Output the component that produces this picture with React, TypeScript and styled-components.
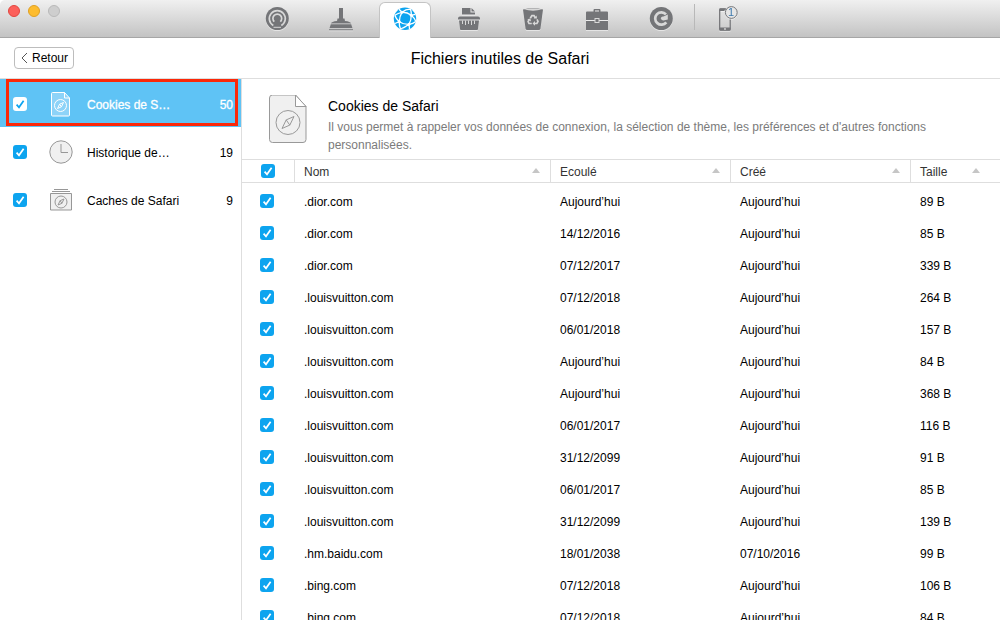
import React from 'react';
import styled, { createGlobalStyle, css } from 'styled-components';

const blue = '#0da4ef';
const line = '#dedede';

const tick = (color: string) =>
  `url("data:image/svg+xml,%3Csvg xmlns='http://www.w3.org/2000/svg' viewBox='0 0 14 14'%3E%3Cpath d='M3.6 7.6 6 10.3 10.6 3.8' fill='none' stroke='%23${color}' stroke-width='1.7'/%3E%3C/svg%3E")`;

const GlobalStyle = createGlobalStyle`
  * { box-sizing: border-box; }
  body {
    margin: 0;
    background: #fff;
    color: #000;
    font-family: "Liberation Sans", Arial, sans-serif;
    font-size: 12px;
    line-height: 16px;
  }
  button, input { font: inherit; color: inherit; margin: 0; }
`;

const Window = styled.div`
  display: flex;
  flex-direction: column;
  height: 100vh;
  overflow: hidden;
`;

const Toolbar = styled.header`
  position: relative;
  display: flex;
  justify-content: center;
  flex: none;
  height: 38px;
  padding-left: 2px;
  background: linear-gradient(#f0f0f0, #dcdcdc 45%, #c3c3c3);
  border-bottom: 1px solid #a6a6a6;
  border-radius: 5px 0 0 0;
`;

const Lights = styled.div`
  position: absolute;
  left: 8px;
  top: 5px;
  display: flex;
  gap: 8px;
`;

const Light = styled.button<{ $fill: string; $edge: string }>`
  width: 12px;
  height: 12px;
  padding: 0;
  border: 1px solid ${(p) => p.$edge};
  border-radius: 50%;
  background: ${(p) => p.$fill};
`;

const Nav = styled.nav`
  display: flex;
`;

const ToolTab = styled.button<{ $active?: boolean; $divided?: boolean }>`
  position: relative;
  display: flex;
  justify-content: center;
  width: 52px;
  height: 36px;
  margin: 2px 6px 0;
  padding: 4px 0 0;
  border: 0;
  background: none;
  color: #747578;
  svg { filter: drop-shadow(0 1px 0 rgba(255, 255, 255, 0.5)); }
  ${(p) =>
    p.$active &&
    css`
      border: 1px solid #c4c4c4;
      border-bottom: 0;
      border-radius: 6px 6px 0 0;
      padding-top: 3px;
      background: #fff;
      color: ${blue};
    `}
  ${(p) =>
    p.$divided &&
    css`
      &::before {
        content: '';
        position: absolute;
        left: -5px;
        top: 2px;
        width: 1px;
        height: 26px;
        background: #b8b8b8;
      }
    `}
`;

const TitleBar = styled.div`
  display: grid;
  grid-template-columns: 1fr auto 1fr;
  align-items: center;
  flex: none;
  height: 41px;
  padding: 0 14px;
  border-bottom: 1px solid ${line};
`;

const BackButton = styled.button`
  display: flex;
  align-items: center;
  justify-self: start;
  gap: 4px;
  height: 22px;
  padding: 0 5px 0 6px;
  border: 1px solid #bdbdbd;
  border-radius: 4px;
  background: #fff;
`;

const Title = styled.h1`
  margin: 0;
  padding-top: 2px;
  font-size: 16px;
  line-height: 20px;
  font-weight: 400;
`;

const Body = styled.div`
  display: flex;
  flex: 1;
  min-height: 0;
`;

const Sidebar = styled.aside`
  flex: none;
  width: 242px;
  border-right: 1px solid ${line};
`;

const Category = styled.label<{ $active?: boolean }>`
  position: relative;
  display: grid;
  grid-template-columns: 14px 26px 1fr auto;
  align-items: center;
  column-gap: 14px;
  height: 48px;
  padding: 2px 8px 0 13px;
  ${(p) =>
    p.$active &&
    css`
      background: #5fc3f5;
      color: #fff;
      -webkit-text-stroke: 0.3px #fff;
      &::after {
        content: '';
        position: absolute;
        inset: 0 3px 1px 6px;
        border: 3px solid #fb2708;
      }
    `}
`;

const CategoryIcon = styled.span`
  display: flex;
  justify-content: center;
  margin-left: 7px;
  margin-right: -7px;
`;

const CategoryText = styled.span`
  padding-top: 2px;
`;

const CategoryName = styled(CategoryText)`
  padding-left: 6px;
`;

const Check = styled.input.attrs({ type: 'checkbox' })<{ $inverse?: boolean }>`
  appearance: none;
  display: block;
  width: 14px;
  height: 14px;
  border-radius: 3px;
  border: 1px solid #a9a9a9;
  background: #fff;
  &:checked {
    border: 0;
    background: ${(p) => (p.$inverse ? tick('0da4ef') : tick('ffffff'))} ${(p) => (p.$inverse ? '#fff' : blue)};
  }
`;

const Main = styled.main`
  flex: 1;
  min-width: 0;
  overflow: hidden;
`;

const Summary = styled.section`
  display: flex;
  gap: 20px;
  height: 80px;
  padding: 16px 60px 0 27px;
  svg { flex: none; }
`;

const SummaryTitle = styled.h2`
  margin: 1px 0 2px;
  font-size: 14px;
  line-height: 20px;
  font-weight: 400;
`;

const SummaryText = styled.p`
  margin: 0;
  line-height: 18px;
  color: #7b7b7b;
`;

const Table = styled.table`
  width: 100%;
  table-layout: fixed;
  border-collapse: separate;
  border-spacing: 0;
  thead::after {
    content: '';
    display: block;
    height: 2px;
  }
`;

const Col = styled.col<{ $width?: number }>`
  width: ${(p) => (p.$width ? `${p.$width}px` : 'auto')};
`;

const HeadCell = styled.th`
  height: 24px;
  padding: 1px 10px 0 9px;
  border: solid ${line};
  border-width: 1px 1px 1px 0;
  color: #333;
  font-weight: 400;
  text-align: left;
  &:first-child { padding: 0 0 0 19px; }
  &:last-child { border-right: 0; padding-right: 20px; }
`;

const HeadLabel = styled.span`
  display: flex;
  align-items: center;
  justify-content: space-between;
`;

const SortMark = styled.i`
  margin-bottom: 2px;
  border: 4px solid transparent;
  border-top: 0;
  border-bottom: 5px solid #c6c6c6;
`;

const Cell = styled.td`
  height: 32px;
  padding: 2px 9px 0;
  &:first-child { padding: 0 0 0 18px; }
`;

function Compass({ cx, cy, r }: { cx: number; cy: number; r: number }) {
  const k = r / 12;
  return (
    <g transform={`translate(${cx} ${cy}) scale(${k})`} strokeWidth={1 / k} fill="none">
      <circle r="12" />
      <path d="M6-6 1.8 2.6-6 6-1.8-2.6ZM-1.8-2.6 1.8 2.6" strokeLinejoin="round" />
    </g>
  );
}

function CookieSmall() {
  return (
    <svg width="20" height="25" viewBox="0 0 20 25" fill="#8dd3f8" stroke="#fff">
      <path d="M2 .5H13.5L18.5 6V23q0 1-1 1H1.5q-1 0-1-1V1.500q0-1 1-1Z" />
      <path d="M13.500.5V6H18.5" fill="none" />
      <Compass cx={9.5} cy={13.5} r={6} />
    </svg>
  );
}

function ClockIcon() {
  return (
    <svg width="24" height="24" viewBox="0 0 24 24" fill="#f0f0f0" stroke="#979797">
      <circle cx="12" cy="12" r="11.200" />
      <path d="M12 4V12.500H19" fill="none" />
    </svg>
  );
}

function CacheIcon() {
  return (
    <svg width="24" height="22" viewBox="0 0 24 22" fill="#f0f0f0" stroke="#979797">
      <path d="M5 .5H19M3 2.500H21M1.500 4.500H22.500V21H1.500Z" />
      <Compass cx={12} cy={13} r={6} />
    </svg>
  );
}

function CookieLarge() {
  return (
    <svg width="39" height="50" viewBox="1 1 39 50" fill="#f0f0f0" stroke="#999">
      <path d="M4 .5H27L37.500 12V45q0 3-3 3H4q-3 0-3-3V3.500q0-3 3-3Z" transform="translate(.5 .5)" />
      <path d="M27.500 1V12.500H38Z" fill="#fff" />
      <Compass cx={20} cy={28.5} r={12} />
    </svg>
  );
}

const gap = '#d8d8d8';

const toolIcons: Record<string, React.ReactNode> = {
  Radar: (
    <>
      <circle cx="12.300" cy="12.500" r="11.500" fill="currentColor" />
      <path d="M8.300 19.500A8 8 0 1 1 16.300 19.500M9.300 15.700A4.400 4.400 0 1 1 15.300 15.700" fill="none" stroke={gap} strokeWidth="1.700" />
      <path d="M9.500 21 11 15.500H13.600L15 21Z" fill="currentColor" />
      <path d="M8.500 21.300H16" stroke={gap} />
    </>
  ),
  Nettoyage: (
    <g fill="currentColor">
      <path d="M10 2H14V12.500H15.500L16 15Q21.500 15.500 22 17.500H2Q2.500 15.500 8 15L8.500 12.500H10Z" />
      <path d="M1.800 18.200H22.200L23.500 22.300H.5ZM0 23.200H24V24.300H0Z" />
    </g>
  ),
  Internet: (
    <>
      <circle cx="12" cy="12.800" r="11.200" fill="currentColor" />
      <g fill="none" stroke="#fff" strokeWidth="1.300">
        <path d="M9 6.300Q14 6 18.300 9.300Q18.300 14.500 16 18.300Q10.500 18.500 6.300 15.700Q6.500 10 9 6.300Z" />
        <path d="M9 6.300 6 3.200M9 6.300Q13 3 17.500 3.200M9 6.300Q5 7 1.800 9.300M18.300 9.300Q18.500 6 17.500 3.200M18.300 9.300 22.200 8.300M18.300 9.300Q21.500 12 22.800 15.500M16 18.300Q20 18 22.800 15.500M16 18.300 16.500 23M16 18.300Q12 21.500 7.500 23M6.300 15.700Q6 19.500 7.500 23M6.300 15.700 2 17.500M6.300 15.700Q3 13 1.800 9.300" />
      </g>
      <g fill="#fff">
        <circle cx="9" cy="6.300" r="1.500" />
        <circle cx="18.300" cy="9.300" r="1.500" />
        <circle cx="6.300" cy="15.700" r="1.500" />
        <circle cx="16" cy="18.300" r="1.500" />
      </g>
    </>
  ),
  Destructeur: (
    <>
      <path d="M5 2H13.500V6.500H18V8.500H5Z M14.500 2 18 5.500H14.500Z" fill="currentColor" />
      <path d="M3 10.500H21Q23 10.500 23 12.500V13.500H1V12.500Q1 10.500 3 10.500ZM2 14.500H22L21 23Q21 24 20 24H4Q3 24 3 23Z" fill="currentColor" />
      <path d="M5.500 14.500V18M8.500 14.500V19M11.500 14.500V18M14.500 14.500V19M17.500 14.500V18" stroke={gap} fill="none" />
    </>
  ),
  Corbeille: (
    <>
      <path d="M2 3.500Q12 1 22 3.500L19.500 22.500Q19.300 24 17.500 24H6.500Q4.700 24 4.500 22.500Z" fill="currentColor" />
      <path d="M3 3.500Q12 1.500 21 3.500Q12 5.800 3 3.500Z" fill={gap} />
      <g fill="none" stroke={gap} strokeWidth="1.700">
        <path d="M9.300 12.300 10.900 9.600H13L14.300 11.800M16 13.400 17 15.500 15.900 17.500H13.300M10.800 17.500H8L7.100 15.600 8.200 13.600" />
      </g>
      <path d="M12.700 12.500 16 12.600 15.600 9.500ZM14 15.100 11.500 17.500 14 19.700ZM6.200 13.300 9.400 12.500 10 15.500Z" fill={gap} />
    </>
  ),
  Outils: (
    <>
      <path d="M2 5.500H8.500V4.300Q8.500 3 9.500 3H14.500Q15.500 3 15.500 4.300V5.500H22Q23 5.500 23 6.500V14H1V6.500Q1 5.500 2 5.500ZM10 5.500H14V4.500H10ZM1 15H23V24H1Z" fill="currentColor" fillRule="evenodd" />
      <rect x="10" y="12.500" width="4" height="4" fill="currentColor" stroke={gap} />
    </>
  ),
  Restauration: (
    <>
      <circle cx="12.300" cy="12.500" r="11.500" fill="currentColor" />
      <path d="M17 8.300A6.200 6.200 0 1 0 17.300 16.300" fill="none" stroke={gap} strokeWidth="2.700" />
      <path d="M11.700 12.300Q12.500 10 14.500 10.500L18.800 8.500V13.500L14.500 14.500Q12.500 14.500 11.700 12.300Z" fill={gap} />
    </>
  ),
  Mobile: (
    <>
      <path d="M13 3H7.500Q6.700 3 6.700 4V23Q6.700 24 7.500 24H16.300Q17.200 24 17.200 23V13.500" fill="none" stroke="currentColor" strokeWidth="1.300" />
      <path d="M6.500 2.500H12L11.500 5H6.500ZM6.500 21.500H17.500V24.500H6.500Z" fill="currentColor" />
      <circle cx="12" cy="23" r=".9" fill={gap} />
      <circle cx="18.300" cy="6.500" r="5.900" fill="#e6e6e6" stroke="currentColor" />
      <text x="18" y="10.300" textAnchor="middle" fontSize="11" fill="#3d79ad">1</text>
    </>
  ),
};

type CategoryData = { name: string; count: number; icon: React.ReactNode; active?: boolean };

const categories: CategoryData[] = [
  { name: 'Cookies de S…', count: 50, icon: <CookieSmall />, active: true },
  { name: 'Historique de…', count: 19, icon: <ClockIcon /> },
  { name: 'Caches de Safari', count: 9, icon: <CacheIcon /> },
];

const today = 'Aujourd’hui';

const cookies = [
  ['.dior.com', today, today, '89 B'],
  ['.dior.com', '14/12/2016', today, '85 B'],
  ['.dior.com', '07/12/2017', today, '339 B'],
  ['.louisvuitton.com', '07/12/2018', today, '264 B'],
  ['.louisvuitton.com', '06/01/2018', today, '157 B'],
  ['.louisvuitton.com', today, today, '84 B'],
  ['.louisvuitton.com', today, today, '368 B'],
  ['.louisvuitton.com', '06/01/2017', today, '116 B'],
  ['.louisvuitton.com', '31/12/2099', today, '91 B'],
  ['.louisvuitton.com', '06/01/2017', today, '85 B'],
  ['.louisvuitton.com', '31/12/2099', today, '139 B'],
  ['.hm.baidu.com', '18/01/2038', '07/10/2016', '99 B'],
  ['.bing.com', '07/12/2018', today, '106 B'],
  ['.bing.com', '07/12/2018', today, '84 B'],
];

export default function App() {
  return (
    <>
      <GlobalStyle />
      <Window>
        <Toolbar>
          <Lights>
            <Light aria-label="Fermer" $fill="#fc605b" $edge="#e2463f" />
            <Light aria-label="Réduire" $fill="#fdbc2e" $edge="#dfa023" />
            <Light aria-label="Agrandir" $fill="#cecece" $edge="#b9b9b9" />
          </Lights>
          <Nav>
            {Object.entries(toolIcons).map(([name, icon]) => (
              <ToolTab key={name} aria-label={name} $active={name === 'Internet'} $divided={name === 'Mobile'}>
                <svg width="26" height="26" viewBox="-1 0 26 26">{icon}</svg>
              </ToolTab>
            ))}
          </Nav>
        </Toolbar>
        <TitleBar>
          <BackButton>
            <svg width="7" height="12" viewBox="0 0 7 12" fill="none" stroke="#555">
              <path d="M6 1 1 6 6 11" />
            </svg>
            Retour
          </BackButton>
          <Title>Fichiers inutiles de Safari</Title>
        </TitleBar>
        <Body>
          <Sidebar>
            {categories.map((c) => (
              <Category key={c.name} $active={c.active}>
                <Check defaultChecked $inverse={c.active} />
                <CategoryIcon>{c.icon}</CategoryIcon>
                <CategoryName>{c.name}</CategoryName>
                <CategoryText>{c.count}</CategoryText>
              </Category>
            ))}
          </Sidebar>
          <Main>
            <Summary>
              <CookieLarge />
              <div>
                <SummaryTitle>Cookies de Safari</SummaryTitle>
                <SummaryText>
                  Il vous permet à rappeler vos données de connexion, la sélection de thème, les préférences et d'autres
                  fonctions personnalisées.
                </SummaryText>
              </div>
            </Summary>
            <Table>
              <colgroup>
                <Col $width={53} />
                <Col />
                <Col $width={180} />
                <Col $width={180} />
                <Col $width={89} />
              </colgroup>
              <thead>
                <tr>
                  <HeadCell>
                    <Check defaultChecked aria-label="Tout sélectionner" />
                  </HeadCell>
                  {['Nom', 'Ecoulé', 'Créé', 'Taille'].map((h) => (
                    <HeadCell key={h}>
                      <HeadLabel>
                        {h}
                        <SortMark />
                      </HeadLabel>
                    </HeadCell>
                  ))}
                </tr>
              </thead>
              <tbody>
                {cookies.map((row, i) => (
                  <tr key={i}>
                    <Cell>
                      <Check defaultChecked aria-label={row[0]} />
                    </Cell>
                    {row.map((value, j) => (
                      <Cell key={j}>{value}</Cell>
                    ))}
                  </tr>
                ))}
              </tbody>
            </Table>
          </Main>
        </Body>
      </Window>
    </>
  );
}
